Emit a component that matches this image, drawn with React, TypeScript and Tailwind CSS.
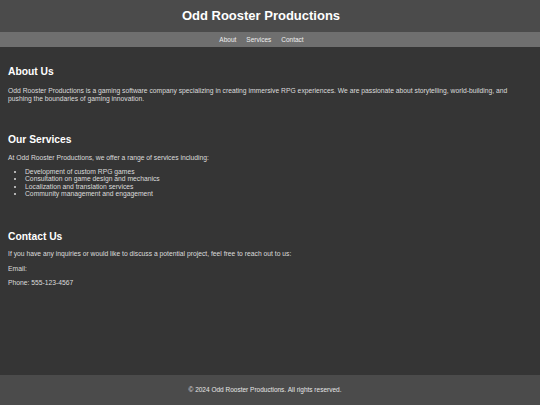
const services = [
  'Development of custom RPG games',
  'Consultation on game design and mechanics',
  'Localization and translation services',
  'Community management and engagement',
]

export default function App() {
  return (
    <div
      className="flex min-h-screen flex-col bg-[#353535] text-[#dcdcdc]"
      style={{ fontFamily: '"Liberation Sans", Arial, sans-serif' }}
    >
      <header className="bg-[#4b4b4b]">
        <h1 className="flex h-[32px] items-center justify-center pr-[18px] text-[13px] font-bold text-white">
          Odd Rooster Productions
        </h1>
        <nav className="flex h-[15px] items-center justify-center gap-[10px] bg-[#6f6f6f] pr-[17px] text-[6.5px] text-[#eeeeee]">
          <a href="#about">About</a>
          <a href="#services">Services</a>
          <a href="#contact">Contact</a>
        </nav>
      </header>

      <main className="flex-1 pl-[8px] pr-[26px] pt-[18px]">
        <section id="about" className="mb-[31px]">
          <h2 className="mb-[9px] text-[10.3px] font-bold leading-[13px] text-white">About Us</h2>
          <p className="text-[6.75px] leading-[7.5px]">
            Odd Rooster Productions is a gaming software company specializing in creating immersive RPG experiences. We are passionate about storytelling, world-building, and pushing the boundaries of gaming innovation.
          </p>
        </section>

        <section id="services" className="mb-[32px]">
          <h2 className="mb-[8px] text-[10.3px] font-bold leading-[13px] text-white">Our Services</h2>
          <p className="mb-[6.5px] text-[6.75px] leading-[7.5px]">
            At Odd Rooster Productions, we offer a range of services including:
          </p>
          <ul className="list-disc pl-[17px] text-[6.75px] leading-[7.4px]">
            {services.map((s) => (
              <li key={s}>{s}</li>
            ))}
          </ul>
        </section>

        <section id="contact">
          <h2 className="mb-[7px] text-[10.3px] font-bold leading-[13px] text-white">Contact Us</h2>
          <p className="mb-[7.5px] text-[6.75px] leading-[7.5px]">
            If you have any inquiries or would like to discuss a potential project, feel free to reach out to us:
          </p>
          <p className="mb-[6.5px] text-[6.75px] leading-[7.5px]">Email:</p>
          <p className="text-[6.75px] leading-[7.5px]">Phone: 555-123-4567</p>
        </section>
      </main>

      <footer className="flex h-[30px] items-center justify-center bg-[#4b4b4b] pr-[10px] text-[6.5px] text-[#e6e6e6]">
        © 2024 Odd Rooster Productions. All rights reserved.
      </footer>
    </div>
  )
}
